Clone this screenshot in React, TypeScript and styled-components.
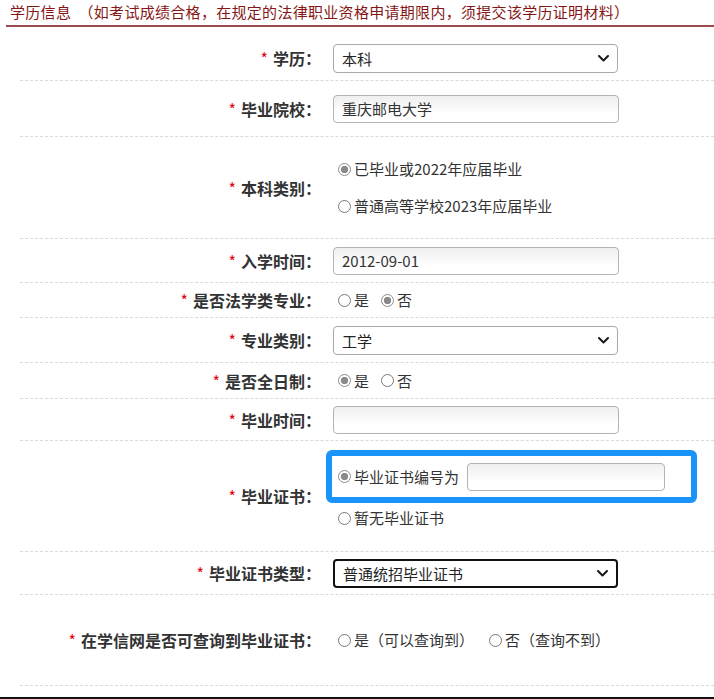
import React from 'react'
import styled, { createGlobalStyle } from 'styled-components'

const GlobalStyle = createGlobalStyle`
  html, body {
    margin: 0;
    padding: 0;
    background: #fff;
  }
  body {
    font-family: "Microsoft YaHei", "Noto Sans CJK SC", "Noto Sans", sans-serif;
    color: #333;
  }
`

const Page = styled.div`
  width: 714px;
  overflow: hidden;
`

const SectionTitle = styled.h3`
  margin: 0 0 9px 6px;
  padding: 2px 4px 3px;
  font-size: 15px;
  line-height: 20px;
  font-weight: normal;
  color: #861616;
  letter-spacing: 0.3px;
  border-bottom: 2px solid #9b4d4d;
  white-space: nowrap;
`

const Row = styled.div<{ $h: number }>`
  box-sizing: border-box;
  height: ${({ $h }) => $h}px;
  margin-left: 20px;
  display: grid;
  grid-template-columns: 301px 1fr;
  column-gap: 12px;
  align-items: center;
  border-bottom: 1px dashed #d9d9d9;
`

const Label = styled.label`
  text-align: right;
  font-size: 16px;
  line-height: 22px;
  font-weight: bold;
  color: #333;
  white-space: nowrap;
`

const Star = styled.span`
  color: #e60012;
  font-weight: normal;
  margin-right: 5px;
`

const FakeSelect = styled.div<{ $focused?: boolean }>`
  box-sizing: border-box;
  width: 285px;
  height: 29px;
  display: flex;
  align-items: center;
  justify-content: space-between;
  padding: 0 8px;
  border: ${({ $focused }) => ($focused ? '2px solid #111' : '1px solid #a9a9a9')};
  border-radius: 4px;
  background: #fff;
  font-size: 15px;
  color: #222;
`

const TextInput = styled.input<{ $w?: number }>`
  box-sizing: border-box;
  width: ${({ $w }) => $w ?? 286}px;
  height: 28px;
  padding: 0 8px;
  border: 1px solid #b4b4b4;
  border-radius: 4px;
  background: linear-gradient(#efefef, #fff 70%);
  font-family: inherit;
  font-size: 15px;
  color: #333;
  outline: none;
`

const OptionList = styled.div<{ $gap: number; $column?: boolean }>`
  display: flex;
  flex-direction: ${({ $column }) => ($column ? 'column' : 'row')};
  align-items: flex-start;
  gap: ${({ $gap }) => $gap}px;
`

const Option = styled.label`
  display: flex;
  align-items: center;
  height: 20px;
  font-size: 15px;
  line-height: 20px;
  color: #333;
  white-space: nowrap;
`

const Radio = styled.span<{ $checked?: boolean }>`
  box-sizing: border-box;
  flex: none;
  width: 13px;
  height: 13px;
  margin: 0 3px 0 5px;
  border-radius: 50%;
  border: 1px solid ${({ $checked }) => ($checked ? '#8d8d8d' : '#7a7a7a')};
  background: ${({ $checked }) =>
    $checked ? 'radial-gradient(circle, #8a8a8a 0 3.4px, #fff 4px)' : '#fff'};
`

const Highlight = styled.div`
  box-sizing: border-box;
  width: 371px;
  height: 53px;
  margin-left: -7px;
  padding-left: 1px;
  display: flex;
  align-items: center;
  border: 6px solid #1a94fb;
  border-radius: 6px;
`

const CertInput = styled(TextInput)`
  margin-left: 8px;
`

const Stack = styled.div`
  align-self: start;
  padding-top: 9px;
  display: flex;
  flex-direction: column;
  gap: 5px;
`

const Bottom = styled.div`
  margin-top: 11px;
  border-top: 3px solid #111;
`

const Chevron = () => (
  <svg width="11" height="7" viewBox="0 0 11 7">
    <polyline points="1,1 5.5,5.5 10,1" fill="none" stroke="#1a1a1a" strokeWidth="2" strokeLinecap="round" strokeLinejoin="round" />
  </svg>
)

const Select: React.FC<{ value: string; focused?: boolean }> = ({ value, focused }) => (
  <FakeSelect $focused={focused}>
    <span>{value}</span>
    <Chevron />
  </FakeSelect>
)

const Req: React.FC<{ children: React.ReactNode }> = ({ children }) => (
  <Label>
    <Star>*</Star>
    {children}
  </Label>
)

const App: React.FC = () => {
  return (
    <Page>
      <GlobalStyle />
      <SectionTitle>学历信息&nbsp;&nbsp;（如考试成绩合格，在规定的法律职业资格申请期限内，须提交该学历证明材料）</SectionTitle>

      <Row $h={45}>
        <Req>学历：</Req>
        <Select value="本科" />
      </Row>

      <Row $h={56}>
        <Req>毕业院校：</Req>
        <TextInput defaultValue="重庆邮电大学" />
      </Row>

      <Row $h={102}>
        <Req>本科类别：</Req>
        <OptionList $gap={17} $column>
          <Option>
            <Radio $checked />
            已毕业或2022年应届毕业
          </Option>
          <Option>
            <Radio />
            普通高等学校2023年应届毕业
          </Option>
        </OptionList>
      </Row>

      <Row $h={44}>
        <Req>入学时间：</Req>
        <TextInput defaultValue="2012-09-01" />
      </Row>

      <Row $h={35}>
        <Req>是否法学类专业：</Req>
        <OptionList $gap={7}>
          <Option>
            <Radio />是
          </Option>
          <Option>
            <Radio $checked />否
          </Option>
        </OptionList>
      </Row>

      <Row $h={45}>
        <Req>专业类别：</Req>
        <Select value="工学" />
      </Row>

      <Row $h={36}>
        <Req>是否全日制：</Req>
        <OptionList $gap={7}>
          <Option>
            <Radio $checked />是
          </Option>
          <Option>
            <Radio />否
          </Option>
        </OptionList>
      </Row>

      <Row $h={42}>
        <Req>毕业时间：</Req>
        <TextInput />
      </Row>

      <Row $h={111}>
        <Req>毕业证书：</Req>
        <Stack>
          <Highlight>
            <Option>
              <Radio $checked />
              毕业证书编号为
            </Option>
            <CertInput $w={198} />
          </Highlight>
          <Option>
            <Radio />
            暂无毕业证书
          </Option>
        </Stack>
      </Row>

      <Row $h={43}>
        <Req>毕业证书类型：</Req>
        <Select value="普通统招毕业证书" focused />
      </Row>

      <Row $h={91}>
        <Req>在学信网是否可查询到毕业证书：</Req>
        <OptionList $gap={10}>
          <Option>
            <Radio />是（可以查询到）
          </Option>
          <Option>
            <Radio />否（查询不到）
          </Option>
        </OptionList>
      </Row>

      <Bottom />
    </Page>
  )
}

export default App
